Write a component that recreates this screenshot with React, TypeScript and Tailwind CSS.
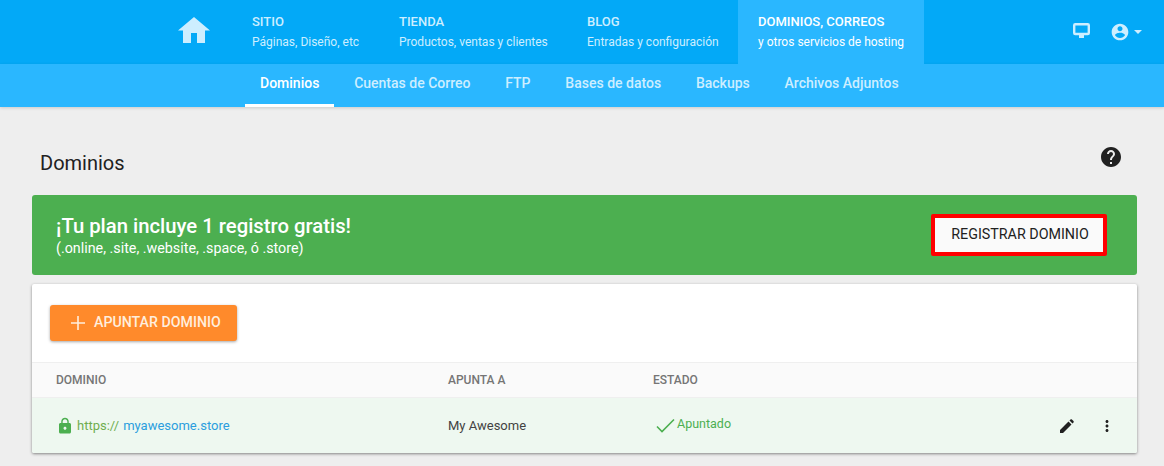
const Icon = ({ d, className }: { d: string; className: string }) => (
  <svg viewBox="0 0 24 24" fill="currentColor" className={className}>
    <path d={d} />
  </svg>
);

const ACCOUNT = "M12 2C6.48 2 2 6.48 2 12s4.48 10 10 10 10-4.48 10-10S17.52 2 12 2zm0 3c1.66 0 3 1.34 3 3s-1.34 3-3 3-3-1.34-3-3 1.34-3 3-3zm0 14.2c-2.5 0-4.71-1.28-6-3.22.03-1.99 4-3.08 6-3.08 1.99 0 5.97 1.09 6 3.08-1.29 1.94-3.5 3.22-6 3.22z";
const HELP = "M12 2C6.48 2 2 6.48 2 12s4.48 10 10 10 10-4.48 10-10S17.52 2 12 2zm1 17h-2v-2h2v2zm2.07-7.75l-.9.92C13.45 12.9 13 13.5 13 15h-2v-.5c0-1.1.45-2.1 1.17-2.83l1.24-1.26c.37-.36.59-.86.59-1.41 0-1.1-.9-2-2-2s-2 .9-2 2H8c0-2.21 1.79-4 4-4s4 1.79 4 4c0 .88-.36 1.68-.93 2.25z";
const LOCK = "M18 8h-1V6c0-2.76-2.24-5-5-5S7 3.24 7 6v2H6c-1.1 0-2 .9-2 2v10c0 1.1.9 2 2 2h12c1.1 0 2-.9 2-2V10c0-1.1-.9-2-2-2zm-6 9c-1.1 0-2-.9-2-2s.9-2 2-2 2 .9 2 2-.9 2-2 2zm3.1-9H8.9V6c0-1.71 1.39-3.1 3.1-3.1 1.71 0 3.1 1.39 3.1 3.1v2z";
const MORE = "M12 8c1.1 0 2-.9 2-2s-.9-2-2-2-2 .9-2 2 .9 2 2 2zm0 2c-1.1 0-2 .9-2 2s.9 2 2 2 2-.9 2-2-.9-2-2-2zm0 6c-1.1 0-2 .9-2 2s.9 2 2 2 2-.9 2-2-.9-2-2-2z";

const topItems = [
  { title: "SITIO", sub: "Páginas, Diseño, etc", w: "w-[147px]" },
  { title: "TIENDA", sub: "Productos, ventas y clientes", w: "w-[188px]" },
  { title: "BLOG", sub: "Entradas y configuración", w: "w-[171px]" },
];

const subItems = ["Cuentas de Correo", "FTP", "Bases de datos", "Backups", "Archivos Adjuntos"];

export default function App() {
  return (
    <div className="h-[466px] min-h-[466px] overflow-hidden bg-[#eeeeee] font-['Roboto',sans-serif]">
      {/* Top nav */}
      <div className="flex h-16 bg-[#03a9f7] pr-[22px] pl-[178px]">
        <div className="w-[54px] pt-[17px]">
          <svg viewBox="0 0 32 26" fill="currentColor" className="h-[26px] w-[32px] text-[#cdeeff]">
            <path d="M16 0L32 13.5H27V26H19V16H13V26H5V13.5H0Z" />
          </svg>
        </div>
        {topItems.map((item) => (
          <div key={item.title} className={`${item.w} px-5 pt-[14px] text-[#cdeeff]`}>
            <div className="text-[13px] leading-[16px] font-medium">{item.title}</div>
            <div className="mt-[3px] text-[12px] leading-[18px] whitespace-nowrap">{item.sub}</div>
          </div>
        ))}
        <div className="w-[186px] bg-[#2ab7ff] px-5 pt-[14px] text-white">
          <div className="text-[13px] leading-[16px] font-medium">DOMINIOS, CORREOS</div>
          <div className="mt-[3px] text-[12px] leading-[18px] whitespace-nowrap">y otros servicios de hosting</div>
        </div>
        <div className="ml-auto flex items-start gap-[20px] pt-[22px] text-[#cdeeff]">
          <svg viewBox="0 0 17 15" className="mt-[1px] h-[15px] w-[17px]" fill="none" stroke="currentColor" strokeWidth="2.4">
            <rect x="1.2" y="1.2" width="14.6" height="9.8" rx="1" />
            <path d="M6 13.2h5" strokeWidth="3.6" />
          </svg>
          <div className="flex items-center">
            <Icon d={ACCOUNT} className="h-[20px] w-[20px]" />
            <div className="ml-[4px] h-0 w-0 border-x-[4px] border-t-[4px] border-x-transparent border-t-[#cdeeff]" />
          </div>
        </div>
      </div>

      {/* Sub nav */}
      <div className="flex h-[43px] gap-[4.8px] bg-[#2ab7ff] pl-[245px] shadow-[0_1px_3px_rgba(0,0,0,0.15)]">
        <div className="h-[43px] border-b-[3px] border-white px-[15px] pt-[10px] text-[14px] leading-[18px] font-medium text-white">
          Dominios
        </div>
        {subItems.map((label) => (
          <div key={label} className="px-[15px] pt-[10px] text-[14px] leading-[18px] font-medium whitespace-nowrap text-[#cdeeff]">
            {label}
          </div>
        ))}
      </div>

      {/* Content */}
      <div className="pr-[27px] pl-[32px]">
        <div className="flex h-[88px] items-start justify-between pr-[14px] pl-2">
          <h1 className="pt-[44px] text-[20px] leading-[24px] font-normal text-[#212121]">Dominios</h1>
          <Icon d={HELP} className="mt-[38px] h-[24px] w-[24px] text-[#212121]" />
        </div>

        <div className="flex h-[80px] items-center justify-between rounded-[3px] bg-[#4caf50] pr-[30px] pl-[24px] text-white">
          <div className="pt-[2px]">
            <div className="text-[20.3px] leading-[24px] font-medium">¡Tu plan incluye 1 registro gratis!</div>
            <div className="text-[14.3px] leading-[20px]">(.online, .site, .website, .space, ó .store)</div>
          </div>
          <button className="h-[42px] w-[176px] rounded-[2px] border-[4px] border-[#ff0000] bg-[#fafafa] pl-[2px] text-[14.3px] font-normal text-[#212121]">
            REGISTRAR DOMINIO
          </button>
        </div>

        <div className="mt-[9px] h-[169px] overflow-hidden rounded-[2px] bg-white shadow-[0_1px_3px_rgba(0,0,0,0.45)]">
          <div className="flex h-[78px] items-start pt-[21px] pl-[18px]">
            <button className="flex h-[36px] w-[187px] items-center rounded-[3px] bg-[#ff8a2b] pl-[21px] text-[14.2px] font-medium text-[#ffeedd] shadow-[0_1px_3px_rgba(0,0,0,0.35)]">
              <svg viewBox="0 0 14 14" className="mr-[9px] h-[14px] w-[14px]" stroke="currentColor" strokeWidth="1.6">
                <path d="M7 0v14M0 7h14" />
              </svg>
              APUNTAR DOMINIO
            </button>
          </div>
          <div className="flex h-[36px] items-center border-y border-[#efefef] bg-[#fafafa] pl-[24px] text-[12px] font-medium text-[#757575]">
            <div className="w-[392px]">DOMINIO</div>
            <div className="w-[205px]">APUNTA A</div>
            <div>ESTADO</div>
          </div>
          <div className="flex h-[55px] items-center bg-[#eef8f0] pl-[24px] text-[13px]">
            <div className="flex w-[392px] items-center">
              <Icon d={LOCK} className="h-[18px] w-[18px] text-[#4caf50]" />
              <span className="ml-[3px] text-[#6fae4f]">https://</span>
              <span className="ml-[4px] text-[#2b9ede]">myawesome.store</span>
            </div>
            <div className="w-[205px] text-[#424242]">My Awesome</div>
            <div className="flex items-center">
              <svg viewBox="0 0 20 14" className="ml-[3px] h-[15px] w-[20px] text-[#4caf50]" fill="none" stroke="currentColor" strokeWidth="1.6">
                <path d="M1 8l5 5L18 1" />
              </svg>
              <span className="ml-[1px] -mt-[3px] text-[12.5px] text-[#4caf50]">Apuntado</span>
            </div>
            <div className="ml-auto flex items-center gap-[24px] pr-[21px] text-[#212121]">
              <svg viewBox="0 0 14 14" fill="currentColor" className="h-[14px] w-[14px]">
                <path d="M0 14V11L8.5 2.5L11.5 5.5L3 14Z M9.5 1.5L10.5 .5c.4-.4 1-.4 1.4 0l1.6 1.6c.4.4.4 1 0 1.4l-1 1z" />
              </svg>
              <Icon d={MORE} className="h-[18px] w-[18px]" />
            </div>
          </div>
        </div>
      </div>
    </div>
  );
}
